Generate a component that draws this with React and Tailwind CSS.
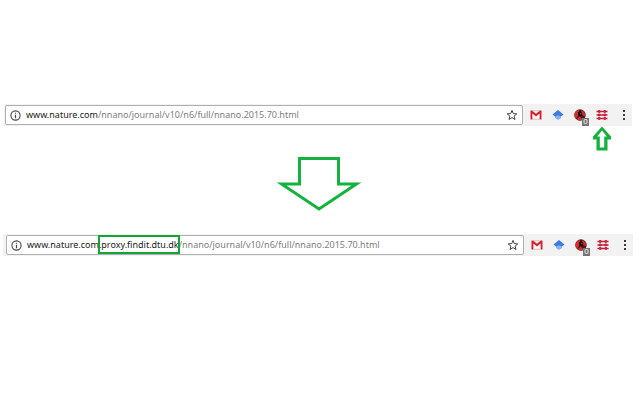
// File: src/App.jsx
import React, { useState } from "react";

function InfoIcon() {
  return (
    <svg viewBox="0 0 11 11" className="w-[11px] h-[11px] shrink-0" fill="none" stroke="#444444">
      <circle cx="5.5" cy="5.5" r="4.6" strokeWidth="1.1" />
      <path d="M5.5 4.8V8.2M5.5 2.7V3.8" strokeWidth="1.2" />
    </svg>
  );
}

function StarIcon() {
  return (
    <svg viewBox="0 0 12 12" className="w-3 h-3" fill="none" stroke="#444444" strokeWidth="1">
      <path d="M6 1.4L7.3 4.6L10.8 4.9L8.1 7.1L9 10.5L6 8.6L3 10.5L3.9 7.1L1.2 4.9L4.7 4.6Z" />
    </svg>
  );
}

function GmailIcon() {
  return (
    <svg viewBox="0 0 12 10" className="w-3 h-[10px]">
      <rect x="0.5" y="0.5" width="11" height="9" fill="#ffffff" />
      <path d="M0.5 9.5V0.5H2.2L6 3.8L9.8 0.5H11.5V9.5H9.6V3.4L6 6.5L2.4 3.4V9.5Z" fill="#d3202a" />
      <path d="M2.4 0.8H9.6M2.4 9.2H9.6" fill="none" stroke="#e39a97" strokeWidth="0.7" />
    </svg>
  );
}

function ScholarIcon() {
  return (
    <svg viewBox="0 0 12 10" className="w-3 h-[10px]">
      <path d="M3 4.5H9V8L6 10L3 8Z" fill="#85b1f5" />
      <path d="M6 0L11.5 4.4L9 6.4Q6 4.4 3 6.4L0.5 4.4Z" fill="#3f7be0" />
    </svg>
  );
}

function BugIcon() {
  return (
    <svg viewBox="0 0 12 12" className="w-3 h-3">
      <circle cx="6" cy="6" r="5.7" fill="#3a2020" />
      <path d="M4.8 0.8A5.3 5.3 0 0 0 2 9.8L5.2 5Z" fill="#e02a2e" />
      <path d="M7.4 1A5.3 5.3 0 0 1 11 7.4L7.4 5.6Z" fill="#d42a2c" />
      <path d="M2.6 10L5.6 7.6L8.8 10.6A5 5 0 0 1 2.6 10Z" fill="#e02a2e" />
      <path d="M3.8 3.4L6.2 2L8.4 4.6L7.6 7.2L4.4 6.8Z" fill="#141010" />
      <circle cx="6.8" cy="4.8" r="0.7" fill="#b44a4a" />
    </svg>
  );
}

function RailsIcon() {
  return (
    <svg viewBox="0 0 12 10" className="w-3 h-[10px]" stroke="#c4203f" fill="#c4203f">
      <path d="M0.5 1.5H11.5M0.5 5H11.5M0.5 8.5H11.5" strokeWidth="1.3" />
      <g stroke="none">
        <circle cx="3.2" cy="1.5" r="1.4" />
        <circle cx="8.8" cy="1.5" r="1.4" />
        <circle cx="3.2" cy="5" r="1.4" />
        <circle cx="8.8" cy="5" r="1.4" />
        <circle cx="3.2" cy="8.5" r="1.4" />
        <circle cx="8.8" cy="8.5" r="1.4" />
      </g>
    </svg>
  );
}

function MenuIcon() {
  return (
    <svg viewBox="0 0 3 12" className="w-[3px] h-3" fill="#3c3c3c">
      <rect x="1" y="1" width="2" height="2" />
      <rect x="1" y="5" width="2" height="2" />
      <rect x="1" y="9" width="2" height="2" />
    </svg>
  );
}

function ToolButton({ label, badge, children }) {
  return (
    <button type="button" aria-label={label} className="relative flex h-5 w-[18px] items-center justify-center last:w-[17px]">
      {children}
      {badge && (
        <span className="absolute -bottom-px right-0 flex h-2 w-[7px] items-center justify-center bg-[#757575] font-['Liberation_Sans',sans-serif] text-[8px] leading-none text-white">
          {badge}
        </span>
      )}
    </button>
  );
}

function BrowserBar({ id, host, proxy, className }) {
  const [path, setPath] = useState("/nnano/journal/v10/n6/full/nnano.2015.70.html");

  return (
    <div className={`flex h-[22px] items-center bg-[#f2f2f2] ${className}`}>
      <div className="flex h-5 min-w-0 flex-1 items-center rounded-xs border border-[#b0b0b0] bg-white px-1 text-[9px] leading-[18px]">
        <InfoIcon />
        <label htmlFor={id} className="ml-[5px] whitespace-nowrap text-[#222222]">
          {host}
          {proxy && (
            <span className="relative">
              {proxy}
              <span className="absolute -left-[3px] -right-px -inset-y-[3px] border-2 border-[#12a537]" />
            </span>
          )}
        </label>
        <input
          id={id}
          value={path}
          onChange={(e) => setPath(e.target.value)}
          className="min-w-0 flex-1 text-[#808080] outline-none"
        />
        <button type="button" aria-label="Bookmark this page">
          <StarIcon />
        </button>
      </div>
      <div className="ml-1 flex gap-1">
        <ToolButton label="Gmail"><GmailIcon /></ToolButton>
        <ToolButton label="Scholar"><ScholarIcon /></ToolButton>
        <ToolButton label="Blocker" badge="0"><BugIcon /></ToolButton>
        <ToolButton label="Proxy"><RailsIcon /></ToolButton>
        <ToolButton label="Menu"><MenuIcon /></ToolButton>
      </div>
    </div>
  );
}

export default function App() {
  return (
    <main className="min-h-screen bg-white pt-[104px] font-['Noto_Sans','Open_Sans',sans-serif]">
      <BrowserBar id="url-before" host="www.nature.com" className="ml-1 mr-2 pl-px" />

      <div className="flex justify-end pr-[29px]">
        <svg viewBox="0 0 18 25" className="w-[18px] h-[25px]">
          <path d="M9 0.5L18 10.5V13.5H14.5V24.5H3.5V13.5H0V10.5Z" fill="#12b23c" />
          <path d="M9 4.5L13.8 10.5H11.2V21.5H6.8V10.5H4.2Z" fill="white" />
        </svg>
      </div>

      <div className="flex justify-center pt-[5px] pr-[2px]">
        <svg viewBox="0 0 84 56" className="w-[84px] h-14" fill="white" stroke="#12b23c" strokeWidth="3">
          <path d="M22.5 2.5H61.5V28H79.5L42 53L4.5 28H22.5Z" />
        </svg>
      </div>

      <BrowserBar id="url-after" host="www.nature.com." proxy="proxy.findit.dtu.dk" className="mt-[22px] ml-[3px] mr-[7px] pl-[3px]" />
    </main>
  );
}
